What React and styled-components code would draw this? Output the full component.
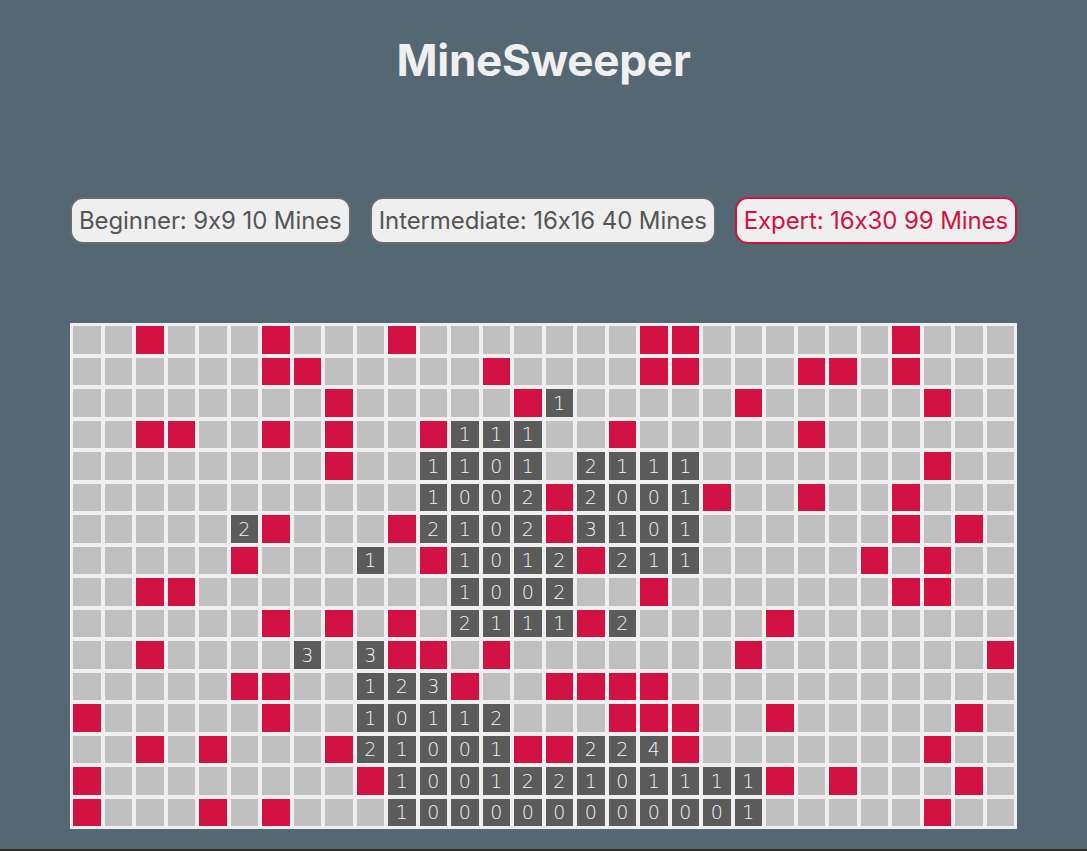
import styled, { createGlobalStyle } from 'styled-components'

const GlobalStyle = createGlobalStyle`
  html, body {
    margin: 0;
    padding: 0;
    background: #2e2e2e;
  }
  body {
    font-family: "Inter", "Liberation Sans", sans-serif;
  }
`

// each row: '.' hidden, 'm' mine, digit = opened
const BOARD = [
  '..m...m...m.......mm......m...',
  '......mm.....m....mm...mm.m...',
  '........m.....m1.....m.....m..',
  '..mm..m.m..m111..m.....m......',
  '........m..1101.2111.......m..',
  '...........1002m2001m..m..m...',
  '.....2m...m2102m3101......m.m.',
  '.....m...1.m1012m211.....m.m..',
  '..mm........1002..m.......mm..',
  '......m.m.m.2111m2....m.......',
  '..m....3.3mm.m.......m.......m',
  '.....mm..123m..mmmm...........',
  'm.....m..10112...mmm..m.....m.',
  '..m.m...m21001mm224m.......m..',
  'm........m100122101111m.m...m.',
  'm...m.m...100000000001.....m..',
]

const Page = styled.div`
  min-height: 849px;
  background: #546873;
  display: flex;
  flex-direction: column;
  align-items: center;
`

const Title = styled.h1`
  margin: 34px 0 0;
  font-size: 44px;
  line-height: 52px;
  font-weight: 700;
  color: #f0f0f0;
  letter-spacing: -0.2px;
`

const Levels = styled.div`
  width: 947px;
  margin-top: 111px;
  display: flex;
  justify-content: space-between;
`

const LevelButton = styled.button`
  height: 47px;
  padding: 0 7px;
  border-radius: 13px;
  border: 2px solid ${p => (p.$active ? '#d11242' : '#6b6b6b')};
  background: #efefef;
  color: ${p => (p.$active ? '#d11242' : '#555555')};
  font-family: "Inter", "Liberation Sans", sans-serif;
  font-feature-settings: "calt" 0;
  font-size: 24px;
  letter-spacing: -0.1px;
  cursor: pointer;
`

const Board = styled.div`
  width: 947px;
  box-sizing: border-box;
  margin-top: 79px;
  padding: 3px;
  background: #efefef;
  display: grid;
  grid-template-columns: repeat(30, 1fr);
  grid-auto-rows: 27.5px;
  gap: 4px;
`

const Cell = styled.div`
  background: ${p =>
    p.$kind === 'mine' ? '#d11242' : p.$kind === 'open' ? '#5b5b5b' : '#c0c0c0'};
  color: #f4f4f4;
  display: flex;
  align-items: center;
  justify-content: center;
  font-family: "DejaVu Sans", sans-serif;
  font-size: 19px;
  font-weight: 300;
`

function App() {
  return (
    <Page>
      <GlobalStyle />
      <Title>MineSweeper</Title>
      <Levels>
        <LevelButton>Beginner: 9x9 10 Mines</LevelButton>
        <LevelButton>Intermediate: 16x16 40 Mines</LevelButton>
        <LevelButton $active>Expert: 16x30 99 Mines</LevelButton>
      </Levels>
      <Board>
        {BOARD.map((row, r) =>
          row.split('').map((ch, c) => {
            const kind = ch === 'm' ? 'mine' : ch === '.' ? 'hidden' : 'open'
            return (
              <Cell key={r + '-' + c} $kind={kind}>
                {kind === 'open' ? ch : ''}
              </Cell>
            )
          })
        )}
      </Board>
    </Page>
  )
}

export default App
